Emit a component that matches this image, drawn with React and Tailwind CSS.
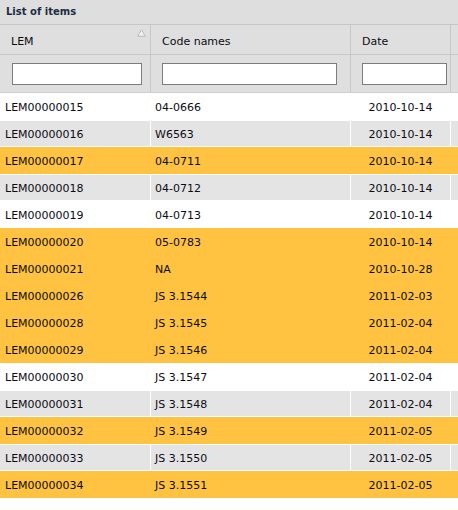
import React from "react";

const rows = [
  ["LEM00000015", "04-0666", "2010-10-14", "white"],
  ["LEM00000016", "W6563", "2010-10-14", "grey"],
  ["LEM00000017", "04-0711", "2010-10-14", "sel"],
  ["LEM00000018", "04-0712", "2010-10-14", "grey"],
  ["LEM00000019", "04-0713", "2010-10-14", "white"],
  ["LEM00000020", "05-0783", "2010-10-14", "sel"],
  ["LEM00000021", "NA", "2010-10-28", "sel"],
  ["LEM00000026", "JS 3.1544", "2011-02-03", "sel"],
  ["LEM00000028", "JS 3.1545", "2011-02-04", "sel"],
  ["LEM00000029", "JS 3.1546", "2011-02-04", "sel"],
  ["LEM00000030", "JS 3.1547", "2011-02-04", "white"],
  ["LEM00000031", "JS 3.1548", "2011-02-04", "grey"],
  ["LEM00000032", "JS 3.1549", "2011-02-05", "sel"],
  ["LEM00000033", "JS 3.1550", "2011-02-05", "grey"],
  ["LEM00000034", "JS 3.1551", "2011-02-05", "sel"],
];

const rowStyle = {
  white: "bg-white border-white",
  grey: "bg-[#e4e4e4] border-white",
  sel: "bg-[#ffc341] border-[#ffc341]",
};

const cellLine = {
  white: "border-white",
  grey: "border-white",
  sel: "border-[#ffc341]",
};

const SortArrow = () => (
  <svg width="9" height="8" viewBox="0 0 9 8" className="absolute right-[4px] top-[4px]">
    <path d="M4.5 0.8 L8.2 7.2 L0.8 7.2 Z" fill="#f4f4f4" stroke="#b9b9b9" strokeWidth="1" />
  </svg>
);

export default function App() {
  return (
    <div
      className="w-[458px] h-[510px] bg-white overflow-hidden text-[11px] text-[#0c0c14]"
      style={{ fontFamily: '"DejaVu Sans", Verdana, sans-serif' }}
    >
      <div className="h-[25px] bg-[#dedede] border-b border-[#c6c6c6] flex items-center pl-[6px] pb-[1px] text-[10px] font-bold text-[#1b2c42]">
        List of items
      </div>

      <div className="flex h-[30px] bg-[#dfdfdf] border-b border-[#c8c8c8]">
        <div className="relative w-[151px] shrink-0 border-r border-[#c8c8c8] flex items-center pl-[11px] pt-[5px]">
          LEM
          <SortArrow />
        </div>
        <div className="w-[200px] shrink-0 border-r border-[#c8c8c8] flex items-center pl-[11px] pt-[5px]">Code names</div>
        <div className="w-[100px] shrink-0 border-r border-[#c8c8c8] flex items-center pl-[11px] pt-[5px]">Date</div>
        <div className="flex-1" />
      </div>

      <div className="flex h-[38px] bg-[#dfdfdf] border-b border-[#d0d0d0]">
        <div className="w-[151px] shrink-0 border-r border-[#c8c8c8] flex items-center pl-[12px]">
          <input className="w-[130px] h-[22px] bg-white border border-[#7d7d7d] outline-none" />
        </div>
        <div className="w-[200px] shrink-0 border-r border-[#c8c8c8] flex items-center pl-[11px]">
          <input className="w-[175px] h-[22px] bg-white border border-[#7d7d7d] outline-none" />
        </div>
        <div className="w-[100px] shrink-0 border-r border-[#c8c8c8] flex items-center pl-[11px]">
          <input className="w-[85px] h-[22px] bg-white border border-[#7d7d7d] outline-none" />
        </div>
        <div className="flex-1" />
      </div>

      {rows.map(([lem, code, date, kind]) => (
        <div key={lem} className={`flex h-[27px] border-y ${rowStyle[kind]}`}>
          <div className={`w-[151px] shrink-0 border-r ${cellLine[kind]} flex items-center pl-[5px] pt-[3px]`}>{lem}</div>
          <div className={`w-[200px] shrink-0 border-r ${cellLine[kind]} flex items-center pl-[4px] pt-[3px]`}>{code}</div>
          <div className={`w-[100px] shrink-0 border-r ${cellLine[kind]} flex items-center justify-center pt-[3px]`}>{date}</div>
          <div className="flex-1" />
        </div>
      ))}
    </div>
  );
}
